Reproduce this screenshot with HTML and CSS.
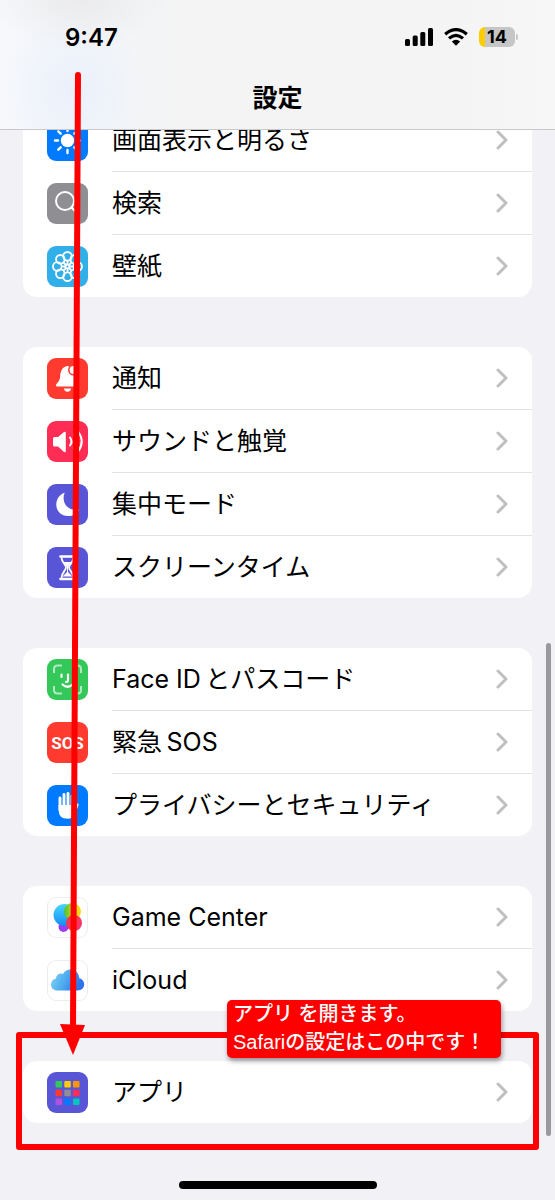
FILE: index.html
```
<!DOCTYPE html>
<html lang="ja">
<head>
<meta charset="utf-8">
<meta name="viewport" content="width=device-width, initial-scale=1">
<title>設定</title>
<link rel="stylesheet" href="styles.css">
</head>
<body>
<svg class="defs" aria-hidden="true"><symbol id="chevron" viewBox="0 0 12 20"><path d="M2 2l8 8-8 8" fill="none" stroke="#bfbfc1" stroke-width="3" stroke-linecap="round" stroke-linejoin="round"/></symbol></svg>
<div class="screen">
  <header class="topbar">
    <div class="status">
      <time class="clock">9:47</time>
      <div class="indicators">
        <svg class="signal" viewBox="0 0 28 18" aria-hidden="true"><rect x="0" y="11" width="5" height="7" rx="1.5"/><rect x="7.7" y="7.6" width="5" height="10.4" rx="1.5"/><rect x="15.3" y="4" width="5" height="14" rx="1.5"/><rect x="23" y="0" width="5" height="18" rx="1.5"/></svg>
        <svg class="wifi" viewBox="0 0 24 18" aria-hidden="true"><path d="M1.2 6.200Q12-3 22.800 6.200M5 10.400Q12 4.200 19 10.400" fill="none" stroke="#000" stroke-width="3.200"/><path d="M7.800 13.600Q12 10 16.200 13.600L12 17.800Z"/></svg>
        <span class="battery"><span class="level">14</span></span>
      </div>
    </div>
    <h1 class="title">設定</h1>
  </header>

  <main class="settings">
    <ul class="group">
      <li><a class="row" href="#display"><svg class="icon blue" viewBox="0 0 41 41" aria-hidden="true"><circle cx="20.5" cy="20.5" r="6.7" fill="#fff"/><path d="M20.5 8v3M20.5 30v3M8 20.500h3M30 20.500h3M11.300 11.300l2.400 2.400M27.300 27.300l2.400 2.400M11.300 29.700l2.400-2.400M27.300 13.700l2.400-2.400" stroke="#fff" stroke-width="2.400" stroke-linecap="round"/></svg><span class="label">画面表示と明るさ<svg class="chevron" aria-hidden="true"><use href="#chevron"/></svg></span></a></li>
      <li><a class="row" href="#search"><svg class="icon gray" viewBox="0 0 41 41" aria-hidden="true"><circle cx="18" cy="18" r="9" fill="none" stroke="#fff" stroke-width="2"/><path d="M24.500 24.500l7 7" stroke="#fff" stroke-width="2.400" stroke-linecap="round"/></svg><span class="label">検索<svg class="chevron" aria-hidden="true"><use href="#chevron"/></svg></span></a></li>
      <li><a class="row" href="#wallpaper"><svg class="icon cyan" viewBox="0 0 41 41" aria-hidden="true"><g fill="none" stroke="#fff" stroke-width="1.800"><circle cx="20.500" cy="10.300" r="4.300"/><circle cx="27.700" cy="13.300" r="4.300"/><circle cx="30.700" cy="20.500" r="4.300"/><circle cx="27.700" cy="27.700" r="4.300"/><circle cx="20.500" cy="30.700" r="4.300"/><circle cx="13.300" cy="27.700" r="4.300"/><circle cx="10.300" cy="20.500" r="4.300"/><circle cx="13.300" cy="13.300" r="4.300"/><circle cx="20.500" cy="20.500" r="2"/><path d="M20.500 14v4.500M20.500 22.500V27M14 20.500h4.500M22.500 20.500H27M16 16l3 3M22 22l3 3M16 25l3-3M22 19l3-3"/></g></svg><span class="label">壁紙<svg class="chevron" aria-hidden="true"><use href="#chevron"/></svg></span></a></li>
    </ul>

    <ul class="group">
      <li><a class="row" href="#notifications"><svg class="icon red" viewBox="0 0 41 41" aria-hidden="true"><path d="M9 27.500c0-2 3.500-3.500 4-8C13.500 13 15 9 20.500 8c6 .5 8 5.500 8 11 .2 5 3.500 6.500 3.500 8.500q0 1-1 1H10q-1 0-1-1z" fill="#fff"/><path d="M17 30.500h7q-.5 3.300-3.500 3.300T17 30.500z" fill="#fff"/><circle cx="26.500" cy="12" r="5.500" fill="#ff3b30"/><circle cx="26.500" cy="12" r="3.900" fill="#fff"/></svg><span class="label">通知<svg class="chevron" aria-hidden="true"><use href="#chevron"/></svg></span></a></li>
      <li><a class="row" href="#sounds"><svg class="icon pink" viewBox="0 0 41 41" aria-hidden="true"><path d="M6 17.500q0-1.500 1.500-1.500H11l6-5q1.800-1 1.800 1v18q0 2-1.800 1l-6-5.500H7.500Q6 25.500 6 24z" fill="#fff"/><path d="M23 16.500q3 4 0 8M27 13.500q5 7 0 14M31 10.500q7.500 10 0 20" fill="none" stroke="#fff" stroke-width="2" stroke-linecap="round"/></svg><span class="label">サウンドと触覚<svg class="chevron" aria-hidden="true"><use href="#chevron"/></svg></span></a></li>
      <li><a class="row" href="#focus"><svg class="icon indigo" viewBox="0 0 41 41" aria-hidden="true"><path d="M17.500 9.300C14 18 21 28 31 25.200c1-.2 1.300.3.800 1.100C29 31 24.500 32.500 20.500 32 13 31.500 9 26 9.300 20 9.600 14.500 13 10.500 16.700 8.900c.7-.3 1-.1.800.4z" fill="#fff"/></svg><span class="label">集中モード<svg class="chevron" aria-hidden="true"><use href="#chevron"/></svg></span></a></li>
      <li><a class="row" href="#screentime"><svg class="icon indigo" viewBox="0 0 41 41" aria-hidden="true"><g fill="none" stroke="#fff" stroke-width="1.800"><path d="M14.500 10.500c0 5 4.500 7 4.500 10s-4.500 5-4.500 10.500M26.500 10.500c0 5-4.500 7-4.500 10s4.500 5 4.500 10.500"/></g><path d="M13.500 9.500h14M13.500 32h14" stroke="#fff" stroke-width="2.600" stroke-linecap="round"/><path d="M16 15h9l-4 4.500V25l4.500 4.500h-10L20 25v-5.500z" fill="#fff"/></svg><span class="label">スクリーンタイム<svg class="chevron" aria-hidden="true"><use href="#chevron"/></svg></span></a></li>
    </ul>

    <ul class="group">
      <li><a class="row" href="#faceid"><svg class="icon green" viewBox="0 0 41 41" aria-hidden="true"><path d="M7 14v-4q0-3.500 3.500-3.500H15M26 6.500h4.500Q34 6.500 34 10v4M7 27v4q0 3.500 3.500 3.500H15M26 34.500h4.500Q34 34.500 34 31v-4" fill="none" stroke="#b2e9c0" stroke-width="2"/><path d="M14.500 15.500v2.500M27 15.500v2.500M21 15.500v6q0 1.500-2 1.300M15.500 25.500q5 4.500 10 0" fill="none" stroke="#fff" stroke-width="2.200" stroke-linecap="round"/></svg><span class="label">Face ID&thinsp;とパスコード<svg class="chevron" aria-hidden="true"><use href="#chevron"/></svg></span></a></li>
      <li><a class="row" href="#sos"><span class="icon red sos">SOS</span><span class="label">緊急&thinsp;SOS<svg class="chevron" aria-hidden="true"><use href="#chevron"/></svg></span></a></li>
      <li><a class="row" href="#privacy"><svg class="icon blue" viewBox="0 0 41 41" aria-hidden="true"><path d="M13 13v12M17 9.500V22M21 8.500V22M25 11v12" fill="none" stroke="#fff" stroke-width="2.900" stroke-linecap="round"/><path d="M11.600 20h14.800v3.500l2.300-4.200q1-1.600 2.300-.8 1 .7.300 2.500L28 29q-2.200 4.700-7.500 4.700-8.900 0-8.900-9z" fill="#fff"/></svg><span class="label">プライバシーとセキュリティ<svg class="chevron" aria-hidden="true"><use href="#chevron"/></svg></span></a></li>
    </ul>

    <ul class="group">
      <li><a class="row" href="#gamecenter"><svg class="icon plain" viewBox="0 0 41 41" aria-hidden="true"><defs><linearGradient id="gb" x1="0" y1="0" x2="0" y2="1"><stop stop-color="#45d8fb"/><stop offset="1" stop-color="#168af5"/></linearGradient><linearGradient id="gy" x1="0" y1="0" x2="1" y2="0"><stop stop-color="#4bc02f"/><stop offset=".6" stop-color="#d6dc20"/><stop offset="1" stop-color="#ffd31a"/></linearGradient><linearGradient id="gr" x1="0" y1="0" x2="1" y2="1"><stop stop-color="#f43b3b"/><stop offset="1" stop-color="#fb3277"/></linearGradient></defs><circle cx="16.500" cy="30" r="5" fill="#9a3cf5"/><circle cx="17.500" cy="18" r="11" fill="url(#gb)"/><circle cx="25.500" cy="14.500" r="8.500" fill="url(#gy)"/><circle cx="27" cy="26" r="8" fill="url(#gr)"/></svg><span class="label">Game Center<svg class="chevron" aria-hidden="true"><use href="#chevron"/></svg></span></a></li>
      <li><a class="row" href="#icloud"><svg class="icon plain" viewBox="0 0 41 41" aria-hidden="true"><defs><linearGradient id="cl" x1="0" y1="0" x2="1" y2=".3"><stop stop-color="#8bd6f8"/><stop offset=".5" stop-color="#4faeee"/><stop offset="1" stop-color="#2f72ed"/></linearGradient></defs><path d="M10.500 30.500C6.500 30.500 4 28 4 24.500c0-3 2-5.500 5-6 0-3.500 4-6 7-4.500 1.500-3 4.200-4.500 7.500-4.500 5 0 8.500 3.500 8.800 8.700 3 .8 4.900 3 4.900 6.100 0 3.700-2.700 6.200-6.500 6.200z" fill="url(#cl)"/></svg><span class="label">iCloud<svg class="chevron" aria-hidden="true"><use href="#chevron"/></svg></span></a></li>
    </ul>

    <section class="spotlight">
      <ul class="group">
        <li><a class="row" href="#apps"><svg class="icon indigo" viewBox="0 0 41 41" aria-hidden="true"><rect x="8.500" y="9" width="6.500" height="6.500" rx="1" fill="#34c759"/><rect x="17.300" y="9" width="6.500" height="6.500" rx="1" fill="#ffcc00"/><rect x="26" y="9" width="6.500" height="6.500" rx="1" fill="#ff9500"/><rect x="8.500" y="17.700" width="6.500" height="6.500" rx="1" fill="#ff3b30"/><rect x="17.300" y="17.700" width="6.500" height="6.500" rx="1" fill="#8e8e93"/><rect x="26" y="17.700" width="6.500" height="6.500" rx="1" fill="#ff2d55"/><rect x="8.500" y="26.500" width="6.500" height="6.500" rx="1" fill="#af52de"/><rect x="17.300" y="26.500" width="6.500" height="6.500" rx="1" fill="#007aff"/><rect x="26" y="26.500" width="6.500" height="6.500" rx="1" fill="#00c7be"/></svg><span class="label">アプリ<svg class="chevron" aria-hidden="true"><use href="#chevron"/></svg></span></a></li>
      </ul>
      <div class="frame"></div>
      <p class="callout">アプリ を開きます。<br>Safariの設定はこの中です！</p>
    </section>
  </main>

  <svg class="arrow" viewBox="0 0 90 1060" aria-hidden="true"><path d="M78 75L73 1030" stroke="#f00" stroke-width="6" stroke-linecap="round"/><path d="M60 1024L85 1025L73 1055Z" fill="#f00"/></svg>
  <div class="scrollbar"></div>
  <div class="home"></div>
</div>
</body>
</html>
```

FILE: styles.css
```
* { box-sizing: border-box; }

body {
  margin: 0;
  background: #f2f1f6;
  color: #000;
  font-family: Inter, "Noto Sans CJK JP", sans-serif;
}

.defs {
  position: absolute;
  width: 0;
  height: 0;
}

.screen {
  position: relative;
  min-height: 100vh;
  overflow: hidden;
}

.topbar {
  position: absolute;
  top: 0;
  left: 0;
  right: 0;
  z-index: 1;
  height: 130px;
  border-bottom: 1px solid #c9c9cc;
  background:
    radial-gradient(ellipse 90px 50px at 80px 0, #ebebec, transparent),
    radial-gradient(ellipse 70px 80px at 75px 90px, #eaf0fb, transparent),
    linear-gradient(90deg, #f6f8fc 0, #f3f5f8 100px, #f4f4f4 200px, #f4f4f4 440px, #f7f7f7 100%);
}

.status {
  display: flex;
  align-items: center;
  justify-content: space-between;
  height: 74px;
  padding: 0 40px 0 65px;
}

.clock {
  font-size: 24px;
  font-weight: 600;
}

.indicators {
  display: flex;
  align-items: center;
  gap: 11px;
}

.signal { width: 28px; height: 18px; }
.wifi { width: 24px; height: 18px; }

.battery {
  position: relative;
  width: 36px;
  height: 20px;
  border-radius: 6px;
  background: linear-gradient(90deg, #ffcc00 6px, #c6c6c6 6px);
}

.battery::after {
  content: "";
  position: absolute;
  top: 7px;
  right: -3px;
  width: 2px;
  height: 6px;
  border-radius: 0 2px 2px 0;
  background: #c6c6c6;
}

.level {
  display: block;
  font-size: 18px;
  font-weight: 700;
  line-height: 20px;
  text-align: center;
}

.title {
  margin: 0;
  font-size: 25px;
  font-weight: 700;
  line-height: 48px;
  text-align: center;
}

.settings {
  display: flex;
  flex-direction: column;
  gap: 50px;
  padding: 109px 23px 77px;
}

.group {
  margin: 0;
  padding: 0;
  overflow: hidden;
  border-radius: 14px;
  background: #fff;
  list-style: none;
}

.row {
  display: flex;
  align-items: center;
  gap: 24px;
  padding-left: 24px;
  color: inherit;
  text-decoration: none;
}

.icon {
  flex: none;
  width: 41px;
  height: 41px;
  border-radius: 9px;
}

.blue { background: #007aff; }
.gray { background: #8e8e93; }
.cyan { background: #30afe8; }
.red { background: #ff3b30; }
.pink { background: #ff2d55; }
.indigo { background: #5856d6; }
.green { background: #34c759; }
.plain { background: #fff; box-shadow: inset 0 0 0 1px #ededef; }

.sos {
  display: flex;
  align-items: center;
  justify-content: center;
  color: #fff;
  font-family: Roboto, sans-serif;
  font-size: 17px;
  font-weight: 700;
}

.label {
  display: flex;
  flex: 1;
  align-items: center;
  justify-content: space-between;
  height: 63px;
  padding-right: 24px;
  border-bottom: 1px solid #e3e3e6;
  font-size: 25px;
  line-height: 36px;
  white-space: nowrap;
}

li:last-child .label {
  height: 62px;
  border-bottom: 0;
}

.chevron {
  flex: none;
  width: 12px;
  height: 20px;
}

.spotlight { position: relative; }

.frame {
  position: absolute;
  inset: -29px -7px -27px;
  border: 6px solid #f00;
  border-radius: 3px;
  pointer-events: none;
}

.callout {
  position: absolute;
  top: -61px;
  right: 31px;
  width: 274px;
  height: 58px;
  margin: 0;
  padding: 0 6px;
  border-radius: 5px;
  background: #f00;
  box-shadow: 1px 3px 5px rgba(0, 0, 0, 0.4);
  color: #fff;
  font-family: "Liberation Sans", "Noto Sans CJK JP", sans-serif;
  font-size: 20px;
  font-weight: 500;
  line-height: 28px;
  white-space: nowrap;
}

.arrow {
  position: absolute;
  top: 0;
  left: 0;
  z-index: 2;
  width: 90px;
  height: 1060px;
  pointer-events: none;
}

.scrollbar {
  position: absolute;
  right: 4px;
  bottom: 64px;
  width: 5px;
  height: 493px;
  border-radius: 3px;
  background: #99999e;
}

.home {
  position: absolute;
  bottom: 11px;
  left: 50%;
  width: 198px;
  height: 8px;
  border-radius: 4px;
  background: #000;
  transform: translateX(-50%);
}
```
